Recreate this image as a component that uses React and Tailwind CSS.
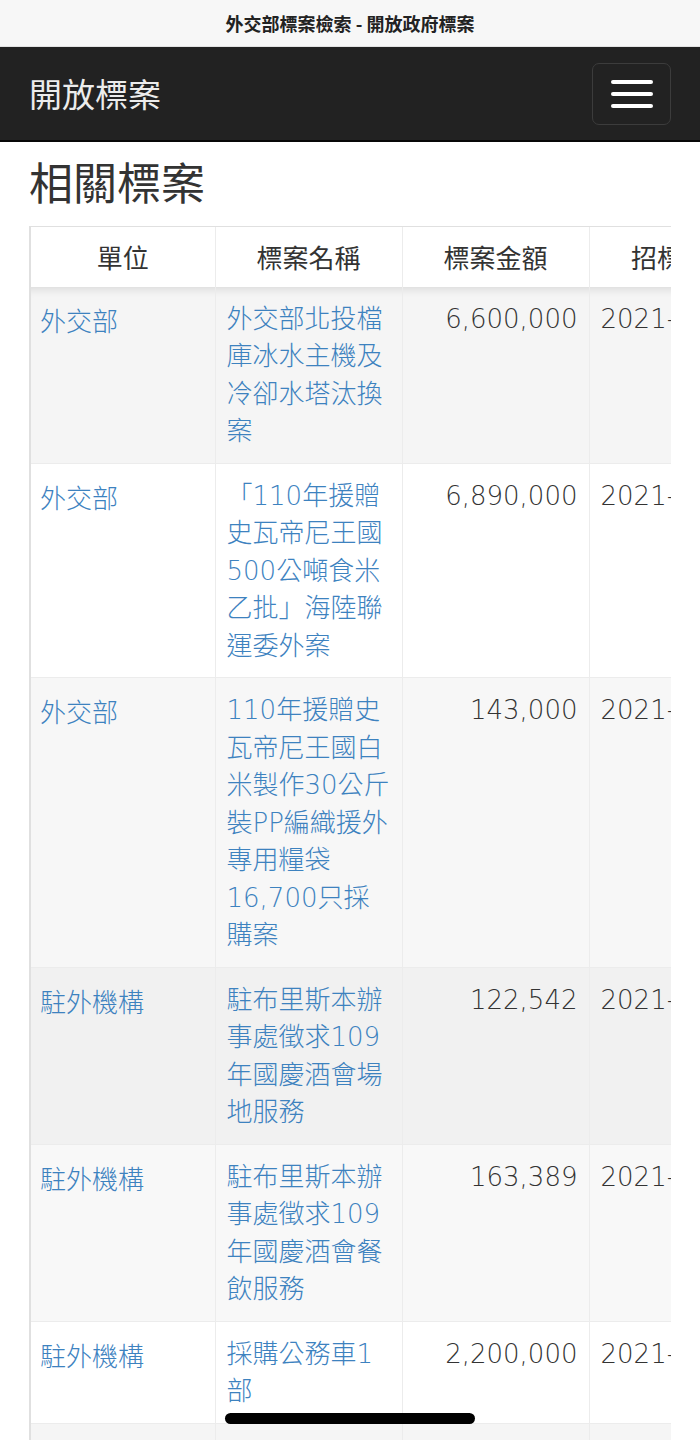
import React from "react";

const rows = [
  {
    unit: "外交部",
    name: "外交部北投檔庫冰水主機及冷卻水塔汰換案",
    amount: "6,600,000",
    date: "2021-03-16",
    bg: "bg-[#f5f5f5]",
  },
  {
    unit: "外交部",
    name: "「110年援贈史瓦帝尼王國500公噸食米乙批」海陸聯運委外案",
    amount: "6,890,000",
    date: "2021-03-09",
    bg: "bg-white",
  },
  {
    unit: "外交部",
    name: "110年援贈史瓦帝尼王國白米製作30公斤裝PP編織援外專用糧袋16,700只採購案",
    amount: "143,000",
    date: "2021-02-25",
    bg: "bg-[#f7f7f7]",
  },
  {
    unit: "駐外機構",
    name: "駐布里斯本辦事處徵求109年國慶酒會場地服務",
    amount: "122,542",
    date: "2021-02-19",
    bg: "bg-[#f1f1f1]",
  },
  {
    unit: "駐外機構",
    name: "駐布里斯本辦事處徵求109年國慶酒會餐飲服務",
    amount: "163,389",
    date: "2021-02-19",
    bg: "bg-[#f8f8f8]",
  },
  {
    unit: "駐外機構",
    name: "採購公務車1部",
    amount: "2,200,000",
    date: "2021-02-08",
    bg: "bg-white",
  },
  {
    unit: "駐外機構",
    name: "駐外館處辦公室租賃案",
    amount: "1,850,000",
    date: "2021-02-01",
    bg: "bg-[#f5f5f5]",
  },
];

const cell =
  "pt-[14px] pb-[12px] align-top border-b border-r border-[#ececec]";

export default function App() {
  return (
    <div className="relative w-[700px] min-h-[1440px] bg-white overflow-hidden font-['Noto_Sans_CJK_TC',sans-serif]">
      {/* browser title bar */}
      <div className="h-[47px] bg-[#f7f7f7] border-b border-[#e2e2e2] flex items-center justify-center">
        <span className="text-[18px] font-semibold text-[#222]">
          外交部標案檢索 - 開放政府標案
        </span>
      </div>

      {/* navbar */}
      <nav className="h-[95px] bg-[#222] border-b-2 border-[#080808] flex items-center justify-between pl-[29px] pr-[29px]">
        <span className="text-[33px] text-[#ececec] leading-none">開放標案</span>
        <button className="w-[79px] h-[62px] rounded-[7px] border border-[#3c3c3c] flex flex-col items-center justify-center gap-[8px]">
          <span className="block w-[42px] h-[4px] rounded-sm bg-white" />
          <span className="block w-[42px] h-[4px] rounded-sm bg-white" />
          <span className="block w-[42px] h-[4px] rounded-sm bg-white" />
        </button>
      </nav>

      <h1 className="mx-[29px] mt-[9px] mb-[15px] text-[44px] leading-[60px] text-[#333] font-normal">
        相關標案
      </h1>

      {/* table */}
      <div className="ml-[29px] w-[642px] overflow-hidden border-l-2 border-t border-[#e0e0e0]">
        <table className="table-fixed border-collapse w-[1000px] text-[26px] leading-[37.5px] font-['DejaVu_Sans','Noto_Sans_CJK_TC',sans-serif] font-light">
          <colgroup>
            <col className="w-[184px]" />
            <col className="w-[187px]" />
            <col className="w-[187px]" />
            <col className="w-[188px]" />
            <col className="w-[254px]" />
          </colgroup>
          <thead>
            <tr className="bg-white">
              {["單位", "標案名稱", "標案金額", "招標日期", "決標日期"].map((h) => (
                <th
                  key={h}
                  className="px-[11px] py-[11px] font-normal text-center text-[#333] border-r border-[#ececec] font-['Noto_Sans_CJK_TC',sans-serif]"
                >
                  {h}
                </th>
              ))}
            </tr>
          </thead>
          <tbody>
            {rows.map((r, i) => (
              <tr
                key={i}
                className={`${r.bg} ${
                  i === 0 ? "shadow-[inset_0_10px_10px_-8px_rgba(0,0,0,0.12)]" : ""
                }`}
              >
                <td className={`${cell} pl-[9px] pr-[11px] text-[#3d82bf]`}>
                  <a className="font-['Noto_Sans_CJK_TC',sans-serif]">{r.unit}</a>
                </td>
                <td className={`${cell} px-[11px] text-[#3d82bf]`}>
                  <a>{r.name}</a>
                </td>
                <td className={`${cell} px-[11px] text-right text-[#333]`}>{r.amount}</td>
                <td className={`${cell} px-[11px] text-[#333] whitespace-nowrap`}>{r.date}</td>
                <td className={`${cell} px-[11px] text-[#333] whitespace-nowrap`}>{r.date}</td>
              </tr>
            ))}
          </tbody>
        </table>
      </div>

      {/* home indicator */}
      <div className="absolute left-[225px] top-[1413px] w-[250px] h-[11px] rounded-full bg-black" />
    </div>
  );
}
